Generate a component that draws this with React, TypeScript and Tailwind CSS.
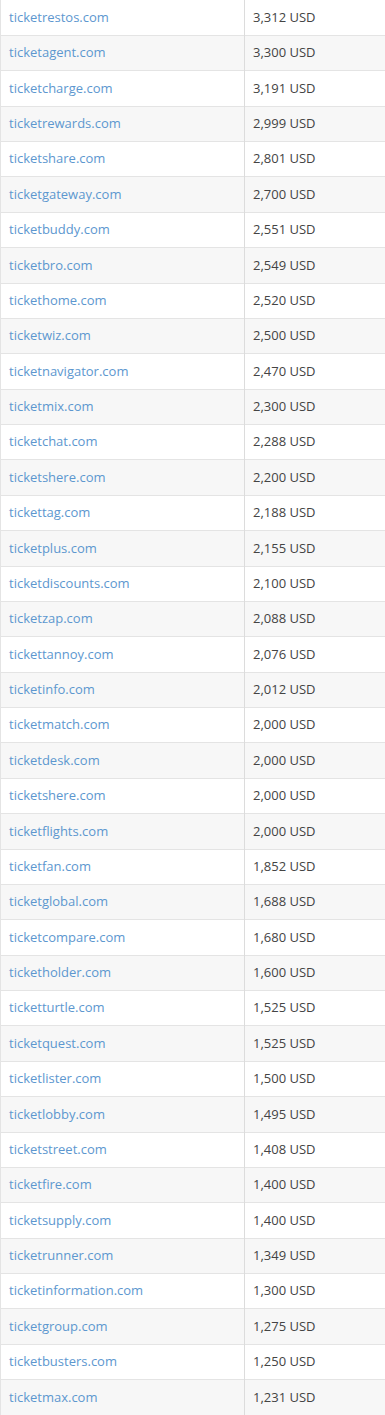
const rows: [string, string][] = [
  ["ticketrestos.com", "3,312 USD"],
  ["ticketagent.com", "3,300 USD"],
  ["ticketcharge.com", "3,191 USD"],
  ["ticketrewards.com", "2,999 USD"],
  ["ticketshare.com", "2,801 USD"],
  ["ticketgateway.com", "2,700 USD"],
  ["ticketbuddy.com", "2,551 USD"],
  ["ticketbro.com", "2,549 USD"],
  ["tickethome.com", "2,520 USD"],
  ["ticketwiz.com", "2,500 USD"],
  ["ticketnavigator.com", "2,470 USD"],
  ["ticketmix.com", "2,300 USD"],
  ["ticketchat.com", "2,288 USD"],
  ["ticketshere.com", "2,200 USD"],
  ["tickettag.com", "2,188 USD"],
  ["ticketplus.com", "2,155 USD"],
  ["ticketdiscounts.com", "2,100 USD"],
  ["ticketzap.com", "2,088 USD"],
  ["tickettannoy.com", "2,076 USD"],
  ["ticketinfo.com", "2,012 USD"],
  ["ticketmatch.com", "2,000 USD"],
  ["ticketdesk.com", "2,000 USD"],
  ["ticketshere.com", "2,000 USD"],
  ["ticketflights.com", "2,000 USD"],
  ["ticketfan.com", "1,852 USD"],
  ["ticketglobal.com", "1,688 USD"],
  ["ticketcompare.com", "1,680 USD"],
  ["ticketholder.com", "1,600 USD"],
  ["ticketturtle.com", "1,525 USD"],
  ["ticketquest.com", "1,525 USD"],
  ["ticketlister.com", "1,500 USD"],
  ["ticketlobby.com", "1,495 USD"],
  ["ticketstreet.com", "1,408 USD"],
  ["ticketfire.com", "1,400 USD"],
  ["ticketsupply.com", "1,400 USD"],
  ["ticketrunner.com", "1,349 USD"],
  ["ticketinformation.com", "1,300 USD"],
  ["ticketgroup.com", "1,275 USD"],
  ["ticketbusters.com", "1,250 USD"],
  ["ticketmax.com", "1,231 USD"],
];

export default function App() {
  return (
    <div className="w-[385px] bg-white font-['Open_Sans',sans-serif] text-[13px] overflow-hidden">
      <table className="w-[400px] border-collapse border-l border-[#e4e4e4]">
        <tbody>
          {rows.map(([domain, price], i) => (
            <tr
              key={i}
              className={`h-[35.375px] border-b border-[#e4e4e4] ${
                i % 2 === 1 ? "bg-[#f7f7f7]" : "bg-white"
              }`}
            >
              <td className="w-[244px] px-2 border-r border-[#dcdcdc] align-middle">
                <a href="#" className="text-[#5d97cf]">
                  {domain}
                </a>
              </td>
              <td className="px-2 text-[#444] align-middle">{price}</td>
            </tr>
          ))}
        </tbody>
      </table>
    </div>
  );
}
